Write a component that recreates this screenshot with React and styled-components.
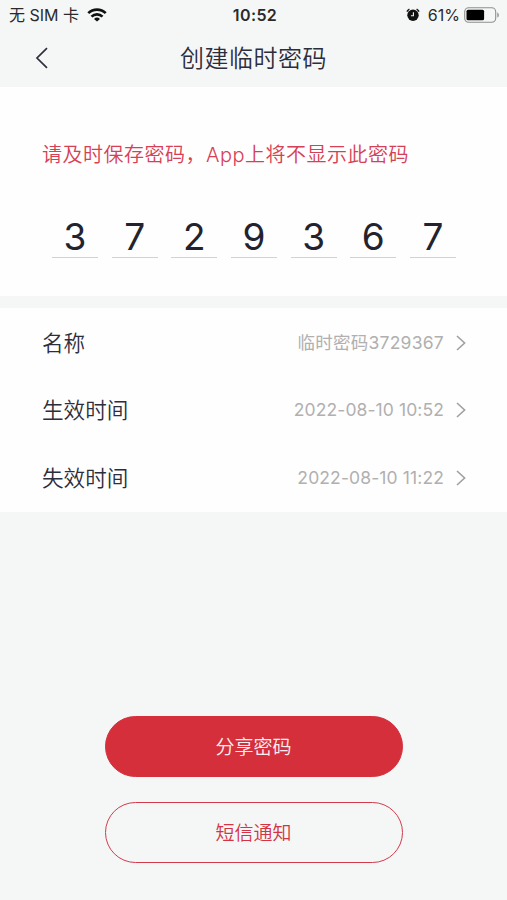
import React from 'react'
import styled, { createGlobalStyle } from 'styled-components'

const code = ['3', '7', '2', '9', '3', '6', '7']

const rows = [
  { label: '名称', value: '临时密码3729367', spacing: '0.25px' },
  { label: '生效时间', value: '2022-08-10 10:52', spacing: '0.1px' },
  { label: '失效时间', value: '2022-08-10 11:22', spacing: '0.12px' },
]

function App() {
  return (
    <Screen>
      <GlobalStyle />
      <StatusBar>
        <Carrier>
          <span>无 SIM 卡</span>
          <WifiIcon />
        </Carrier>
        <Clock>10:52</Clock>
        <Power>
          <AlarmIcon />
          <span>61%</span>
          <BatteryIcon />
        </Power>
      </StatusBar>

      <Header>
        <BackButton aria-label="返回">
          <svg width="14" height="22" viewBox="0 0 14 22" fill="none">
            <path d="M12 1.2L2 11l10 9.8" stroke="#2d2e3c" strokeWidth="1.7" />
          </svg>
        </BackButton>
        <Title>创建临时密码</Title>
      </Header>

      <CodePanel>
        <Notice>请及时保存密码，App上将不显示此密码</Notice>
        <Digits>
          {code.map((digit, i) => (
            <Digit key={i}>{digit}</Digit>
          ))}
        </Digits>
      </CodePanel>

      <List>
        {rows.map((row) => (
          <Row key={row.label}>
            <Label>{row.label}</Label>
            <Value $spacing={row.spacing}>{row.value}</Value>
            <svg width="10" height="16" viewBox="0 0 10 16" fill="none">
              <path d="M1 1l7.6 7L1 15" stroke="#a0a0a0" strokeWidth="1.6" />
            </svg>
          </Row>
        ))}
      </List>

      <Actions>
        <ShareButton>分享密码</ShareButton>
        <SmsButton>短信通知</SmsButton>
      </Actions>
    </Screen>
  )
}

export default App

function WifiIcon() {
  return (
    <svg width="20" height="14" viewBox="0 0 20 14" fill="none" stroke="#111" strokeWidth="2.7">
      <path d="M1.3 5.1a12.4 12.4 0 0 1 17.4 0" />
      <path d="M4.5 8.6a7.8 7.8 0 0 1 11 0" />
      <path d="M10 13.6L7 10.9a4.3 4.3 0 0 1 6 0z" fill="#111" stroke="none" />
    </svg>
  )
}

function AlarmIcon() {
  return (
    <svg width="14" height="14" viewBox="0 0 14 14" fill="none">
      <circle cx="7" cy="7.2" r="5.7" fill="#111" />
      <path d="M.9 3.6A6 6 0 0 1 3.4 1.1M13.1 3.6a6 6 0 0 0-2.5-2.5" stroke="#111" strokeWidth="1.3" />
      <path d="M7.4 4.2v3.5H4.9" stroke="#f5f7f7" strokeWidth="1.1" />
    </svg>
  )
}

function BatteryIcon() {
  return (
    <svg width="36" height="16" viewBox="0 0 36 16" fill="none">
      <rect x="0.7" y="0.7" width="31" height="14.6" rx="4" stroke="#8d8f8f" strokeWidth="1.1" />
      <rect x="2.5" y="2.7" width="17.6" height="10.6" rx="1.6" fill="#000" />
      <path d="M33.3 5.4c2 .6 2 4.6 0 5.2z" fill="#8d8f8f" />
    </svg>
  )
}

const GlobalStyle = createGlobalStyle`
  * {
    box-sizing: border-box;
  }

  body {
    margin: 0;
    background: #f5f7f7;
    font-family: Inter, "Noto Sans CJK SC", sans-serif;
    font-weight: 350;
  }

  button {
    font-family: inherit;
    padding: 0;
    cursor: pointer;
  }

  svg {
    display: block;
    flex-shrink: 0;
  }
`

const Screen = styled.div`
  display: flex;
  flex-direction: column;
  height: 900px;
  background: #f5f7f7;
`

const StatusBar = styled.div`
  display: grid;
  grid-template-columns: 1fr auto 1fr;
  align-items: center;
  height: 30px;
  padding: 0 7px 0 9px;
  font-size: 16px;
  font-weight: 400;
  line-height: 20px;
  color: #2a2a2a;
`
const Carrier = styled.div`
  display: flex;
  align-items: center;
  gap: 8px;
  white-space: nowrap;
`
const Clock = styled.div`
  padding-left: 1px;
  font-weight: 600;
  letter-spacing: 0.4px;
`
const Power = styled.div`
  display: flex;
  align-items: center;
  justify-content: flex-end;

  span {
    margin: 0 4px 0 8px;
  }
`

const Header = styled.div`
  display: grid;
  grid-template-columns: 1fr auto 1fr;
  align-items: center;
  height: 57px;
  padding: 0 35px 2px;
`
const BackButton = styled.button`
  justify-self: start;
  border: none;
  background: none;
`
const Title = styled.h1`
  margin: 0;
  padding-top: 2px;
  font-size: 24px;
  font-weight: 350;
  line-height: 34px;
  letter-spacing: 0.5px;
  color: #2d2e3c;
`

const CodePanel = styled.section`
  height: 209px;
  padding: 53px 51px 0 42px;
  background: #fefefe;
`
const Notice = styled.p`
  margin: 0;
  font-size: 20px;
  line-height: 30px;
  letter-spacing: 0.5px;
  white-space: nowrap;
  color: #d64055;
`
const Digits = styled.div`
  display: flex;
  justify-content: space-between;
  margin-top: 41px;
  padding-left: 10px;
`
const Digit = styled.div`
  width: 46px;
  height: 47px;
  border-bottom: 1px solid #cfd3d3;
  font-size: 37px;
  font-weight: 380;
  line-height: 52px;
  text-align: center;
  color: #23232f;
`

const List = styled.section`
  height: 204px;
  margin-top: 12px;
  padding: 1px 41px 0 42px;
  background: #fefefe;
`
const Row = styled.div`
  display: flex;
  align-items: center;
  height: 67.5px;
`
const Label = styled.span`
  flex: 1;
  font-size: 21.6px;
  line-height: 30px;
  color: #2d2e3c;
`
const Value = styled.span`
  margin-right: 12px;
  font-size: 17.5px;
  font-weight: 400;
  line-height: 26px;
  letter-spacing: ${(props) => props.$spacing};
  color: #b0b0b0;
`

const Actions = styled.div`
  display: flex;
  flex-direction: column;
  align-items: center;
  gap: 25px;
  margin-top: 204px;
`
const ShareButton = styled.button`
  width: 298px;
  height: 61px;
  padding-top: 3px;
  border: 1px solid #d52f3c;
  border-radius: 31px;
  background: #d52f3c;
  color: #fdeff0;
  font-size: 19px;
  font-weight: 350;
  line-height: 28px;
`
const SmsButton = styled(ShareButton)`
  border-color: #d33a4c;
  background: transparent;
  color: #d33343;
`
